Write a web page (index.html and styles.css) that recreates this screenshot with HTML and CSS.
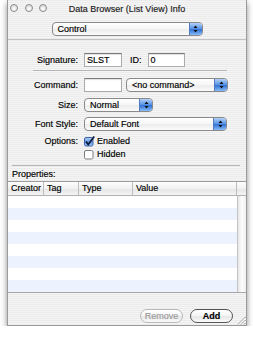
FILE: index.html
```html
<!DOCTYPE html>
<html lang="en">
<head>
    <meta charset="UTF-8">
    <title>Data Browser (List View) Info</title>
    <link rel="stylesheet" href="styles.css">
</head>
<body>

    <div class="window">

        <!-- Title bar -->
        <div class="titlebar">
            <div class="lights">
                <span class="light"></span>
                <span class="light"></span>
                <span class="light"></span>
            </div>
            <div class="title">Data Browser (List View) Info</div>
        </div>

        <!-- Kind popup -->
        <div class="kind">
            <div class="popup popup-control">
                <span class="popup-text">Control</span>
                <span class="popup-arrows">
                    <svg width="5" height="8" viewBox="0 0 5 8"><path d="M2.5 0.5 L4.5 3 L0.5 3 Z M0.5 5 L4.5 5 L2.5 7.5 Z" fill="#111"/></svg>
                </span>
            </div>
        </div>

        <!-- Form -->
        <div class="form">
            <div class="row row-sig">
                <span class="lbl">Signature:</span>
                <div class="field field-sig">SLST</div>
                <span class="lbl-id">ID:</span>
                <div class="field field-id">0</div>
            </div>

            <div class="sep sep-top"></div>

            <div class="row row-cmd">
                <span class="lbl">Command:</span>
                <div class="field field-cmd"></div>
                <div class="popup popup-cmd">
                    <span class="popup-text">&lt;no command&gt;</span>
                    <span class="popup-arrows">
                        <svg width="5" height="8" viewBox="0 0 5 8"><path d="M2.5 0.5 L4.5 3 L0.5 3 Z M0.5 5 L4.5 5 L2.5 7.5 Z" fill="#111"/></svg>
                    </span>
                </div>
            </div>

            <div class="row row-size">
                <span class="lbl">Size:</span>
                <div class="popup popup-size">
                    <span class="popup-text">Normal</span>
                    <span class="popup-arrows">
                        <svg width="5" height="8" viewBox="0 0 5 8"><path d="M2.5 0.5 L4.5 3 L0.5 3 Z M0.5 5 L4.5 5 L2.5 7.5 Z" fill="#111"/></svg>
                    </span>
                </div>
            </div>

            <div class="row row-font">
                <span class="lbl">Font Style:</span>
                <div class="popup popup-font">
                    <span class="popup-text">Default Font</span>
                    <span class="popup-arrows">
                        <svg width="5" height="8" viewBox="0 0 5 8"><path d="M2.5 0.5 L4.5 3 L0.5 3 Z M0.5 5 L4.5 5 L2.5 7.5 Z" fill="#111"/></svg>
                    </span>
                </div>
            </div>

            <div class="row row-opt">
                <span class="lbl">Options:</span>
                <svg class="check" width="11" height="11" viewBox="0 0 11 11">
                    <defs>
                        <linearGradient id="blue" x1="0" y1="0" x2="0" y2="1">
                            <stop offset="0" stop-color="#b9d5f8"/>
                            <stop offset="0.5" stop-color="#5f97e4"/>
                            <stop offset="1" stop-color="#9cc6f7"/>
                        </linearGradient>
                    </defs>
                    <rect x="0.5" y="1.5" width="8.5" height="8.5" rx="1.5" fill="url(#blue)" stroke="#3c62a6"/>
                    <path d="M2 5.5 L4.2 8.6 L10.2 0.6" fill="none" stroke="#0d1a3a" stroke-width="1.7"/>
                </svg>
                <span class="opt-text">Enabled</span>
            </div>

            <div class="row row-opt row-hidden">
                <span class="lbl"></span>
                <svg class="check" width="11" height="11" viewBox="0 0 11 11">
                    <rect x="0.5" y="1.5" width="8.5" height="8.5" rx="1.5" fill="#fff" stroke="#7d7d7d"/>
                </svg>
                <span class="opt-text">Hidden</span>
            </div>

            <div class="sep sep-bottom"></div>

            <div class="props-label">Properties:</div>
        </div>

        <!-- Properties table -->
        <div class="table">
            <div class="thead">
                <div class="th">Creator</div>
                <div class="th">Tag</div>
                <div class="th">Type</div>
                <div class="th">Value</div>
                <div class="th th-corner"></div>
            </div>
            <div class="tbody">
                <div class="rows">
                    <div class="tr"></div>
                    <div class="tr"></div>
                    <div class="tr"></div>
                    <div class="tr"></div>
                    <div class="tr"></div>
                    <div class="tr"></div>
                    <div class="tr"></div>
                    <div class="tr"></div>
                </div>
                <div class="scroll"></div>
            </div>
        </div>

        <!-- Buttons -->
        <div class="bottom">
            <div class="btn btn-disabled">Remove</div>
            <div class="btn btn-add">Add</div>
            <svg class="grip" width="9" height="9" viewBox="0 0 9 9">
                <path d="M8.5 1 L1 8.5 M8.5 4 L4 8.5 M8.5 7 L7 8.5" stroke="#8a8a8a" stroke-width="1"/>
                <path d="M8.5 2 L2 8.5 M8.5 5 L5 8.5" stroke="#fff" stroke-width="1"/>
            </svg>
        </div>

    </div>

</body>
</html>
```

FILE: styles.css
```css
/* General Styles */
body {
    margin: 0;
    background: #fff;
    font-family: "Liberation Sans", Arial, sans-serif;
    font-size: 9px;
    color: #000;
    -webkit-text-stroke: 0.15px currentColor;
}

/* Window */
.window {
    box-sizing: border-box;
    width: 240px;
    height: 326px;
    margin-left: 7px;
    border: 1px solid #9a9a9a;
    border-top: none;
    background: repeating-linear-gradient(#ebebeb 0 1px, #f5f5f5 1px 2px);
    box-shadow: 0 3px 6px rgba(0,0,0,0.45);
    display: flex;
    flex-direction: column;
}

.titlebar {
    height: 18px;
    display: grid;
    grid-template-columns: 1fr auto 1fr;
}

.lights {
    display: flex;
    gap: 6.5px;
    padding: 4px 0 0 2px;
}

.light {
    box-sizing: border-box;
    width: 8px;
    height: 8px;
    border-radius: 50%;
    border: 1px solid #8a8a8a;
    background: radial-gradient(circle at 50% 70%, #ffffff, #d2d2d2);
}

.title {
    line-height: 18px;
    color: #1a1a1a;
}

.kind {
    padding: 4px 0 3px;
    border-bottom: 1px solid #c2c2c2;
    display: flex;
    justify-content: center;
}

/* Popups */
.popup {
    box-sizing: border-box;
    height: 14px;
    display: flex;
    border: 1px solid #8a8a8a;
    border-radius: 4px;
    background: linear-gradient(#ffffff, #f6f6f6 50%, #ececec 55%, #fbfbfb);
    overflow: hidden;
}

.popup-text {
    flex: 1;
    padding-left: 5px;
    line-height: 12px;
    white-space: nowrap;
}

.popup-arrows {
    width: 12px;
    border-left: 1px solid #4f7ac0;
    background: linear-gradient(#b3d0f8, #5e97e6 45%, #3473d6 55%, #86bcf6);
    display: flex;
    align-items: center;
    justify-content: center;
}

.popup-control { width: 151px; }
.popup-cmd { width: 102px; margin-left: 4px; }
.popup-size { width: 69px; }
.popup-font { width: 143px; }

/* Form */
.form {
    padding-top: 13px;
}

.row {
    display: flex;
    align-items: center;
    height: 14px;
}

.lbl {
    width: 70px;
    margin-right: 6px;
    text-align: right;
}

.lbl-id {
    margin: 0 6px 0 8px;
}

.field {
    box-sizing: border-box;
    height: 14px;
    background: #fff;
    border: 1px solid #ababab;
    border-top-color: #7a7a7a;
    box-shadow: inset 0 1px 1px rgba(0,0,0,0.12);
    padding-left: 2px;
    line-height: 12px;
}

.field-sig, .field-cmd { width: 38px; }
.field-id { width: 37px; }

.sep {
    height: 1px;
    background: #b6b6b6;
}

.sep-top {
    margin: 3px 0 0 25px;
    width: 194px;
}

.row-cmd { margin-top: 7px; }
.row-size { margin-top: 6px; }
.row-font { margin-top: 5px; }

.row-opt {
    height: 12px;
    margin-top: 4px;
}

.row-hidden { margin-top: 1px; }

.check {
    margin-right: 2px;
}

.sep-bottom {
    margin: 5px 0 0 4px;
    width: 228px;
}

.props-label {
    margin-top: 2px;
    padding-left: 4px;
    line-height: 12px;
}

/* Table */
.table {
    margin-top: 1px;
    border-top: 1px solid #9c9c9c;
    border-bottom: 1px solid #a6a6a6;
    background: #fff;
}

.thead {
    box-sizing: border-box;
    height: 14px;
    display: grid;
    grid-template-columns: 36px 35px 54px 104px 1fr;
    border-bottom: 1px solid #b2b2b2;
    background: linear-gradient(#fdfdfd, #f1f1f1 50%, #e6e6e6 55%, #f4f4f4);
}

.th {
    box-sizing: border-box;
    border-right: 1px solid #bdbdbd;
    padding-left: 3px;
    line-height: 13px;
}

.th-corner { border-right: none; }

.tbody {
    display: flex;
}

.rows {
    flex: 1;
}

.tr {
    height: 12px;
}

.tr:nth-child(even) {
    background: #edf3fe;
}

.scroll {
    width: 9px;
    background: linear-gradient(to right, #c4c4c4 0 1px, #e6e6e6 1px, #fdfdfd 55%, #efefef);
}

/* Bottom bar */
.bottom {
    flex: 1;
    position: relative;
    display: flex;
    justify-content: flex-end;
    align-items: flex-start;
    padding: 16px 13px 0 0;
}

.btn {
    box-sizing: border-box;
    width: 43px;
    height: 14px;
    border-radius: 7px;
    border: 1px solid #555;
    background: linear-gradient(#ffffff, #f4f4f4 50%, #e6e6e6 55%, #fbfbfb);
    text-align: center;
    line-height: 12px;
}

.btn-disabled {
    color: #9a9a9a;
    border-color: #b8b8b8;
}

.btn-add {
    margin-left: 7px;
    font-weight: bold;
}

.grip {
    position: absolute;
    right: 0;
    bottom: 0;
}
```
